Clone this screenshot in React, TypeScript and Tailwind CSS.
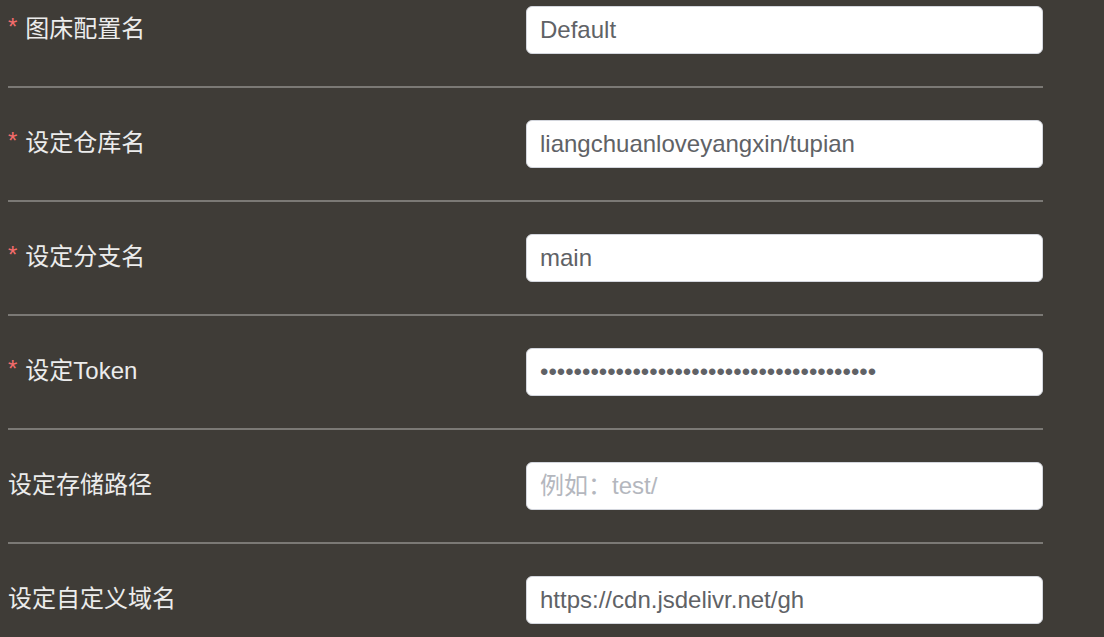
import React from "react";

const rows: { label: string; required: boolean; value?: string; placeholder?: string; type?: string }[] = [
  { label: "图床配置名", required: true, value: "Default" },
  { label: "设定仓库名", required: true, value: "liangchuanloveyangxin/tupian" },
  { label: "设定分支名", required: true, value: "main" },
  { label: "设定Token", required: true, value: "ghp_abcdefghijklmnopqrstuvwxyz0123456789", type: "password" },
  { label: "设定存储路径", required: false, placeholder: "例如：test/" },
  { label: "设定自定义域名", required: false, value: "https://cdn.jsdelivr.net/gh" },
];

export default function App() {
  return (
    <div
      className="w-[1104px] h-[637px] overflow-hidden bg-[#3f3c37]"
      style={{ fontFamily: '"Liberation Sans", "Noto Sans CJK SC", sans-serif' }}
    >
      <div className="ml-[8px] w-[1035px] pt-[6px]">
        {rows.map((r, i) => (
          <div key={i}>
            <div className="grid grid-cols-[518px_517px] items-center h-[48px]">
              <div className="flex items-center text-[24px] text-[#ececec] leading-none pb-[2px]">
                {r.required && <span className="text-[#f56c6c] mr-[8px] text-[24px] -mt-[4px]">*</span>}
                <span>{r.label}</span>
              </div>
              <input
                type={r.type ?? "text"}
                defaultValue={r.value}
                placeholder={r.placeholder}
                className="w-[517px] h-[48px] bg-white border border-[#d3d6dd] rounded-[6px] px-[13px] text-[24px] text-[#606266] placeholder:text-[#b4b7be] outline-none"
                style={{ fontFamily: '"Liberation Sans", "Noto Sans CJK SC", sans-serif' }}
              />
            </div>
            {i < rows.length - 1 && <div className="h-[2px] bg-[#7b7975] my-[32px]" />}
          </div>
        ))}
      </div>
    </div>
  );
}
